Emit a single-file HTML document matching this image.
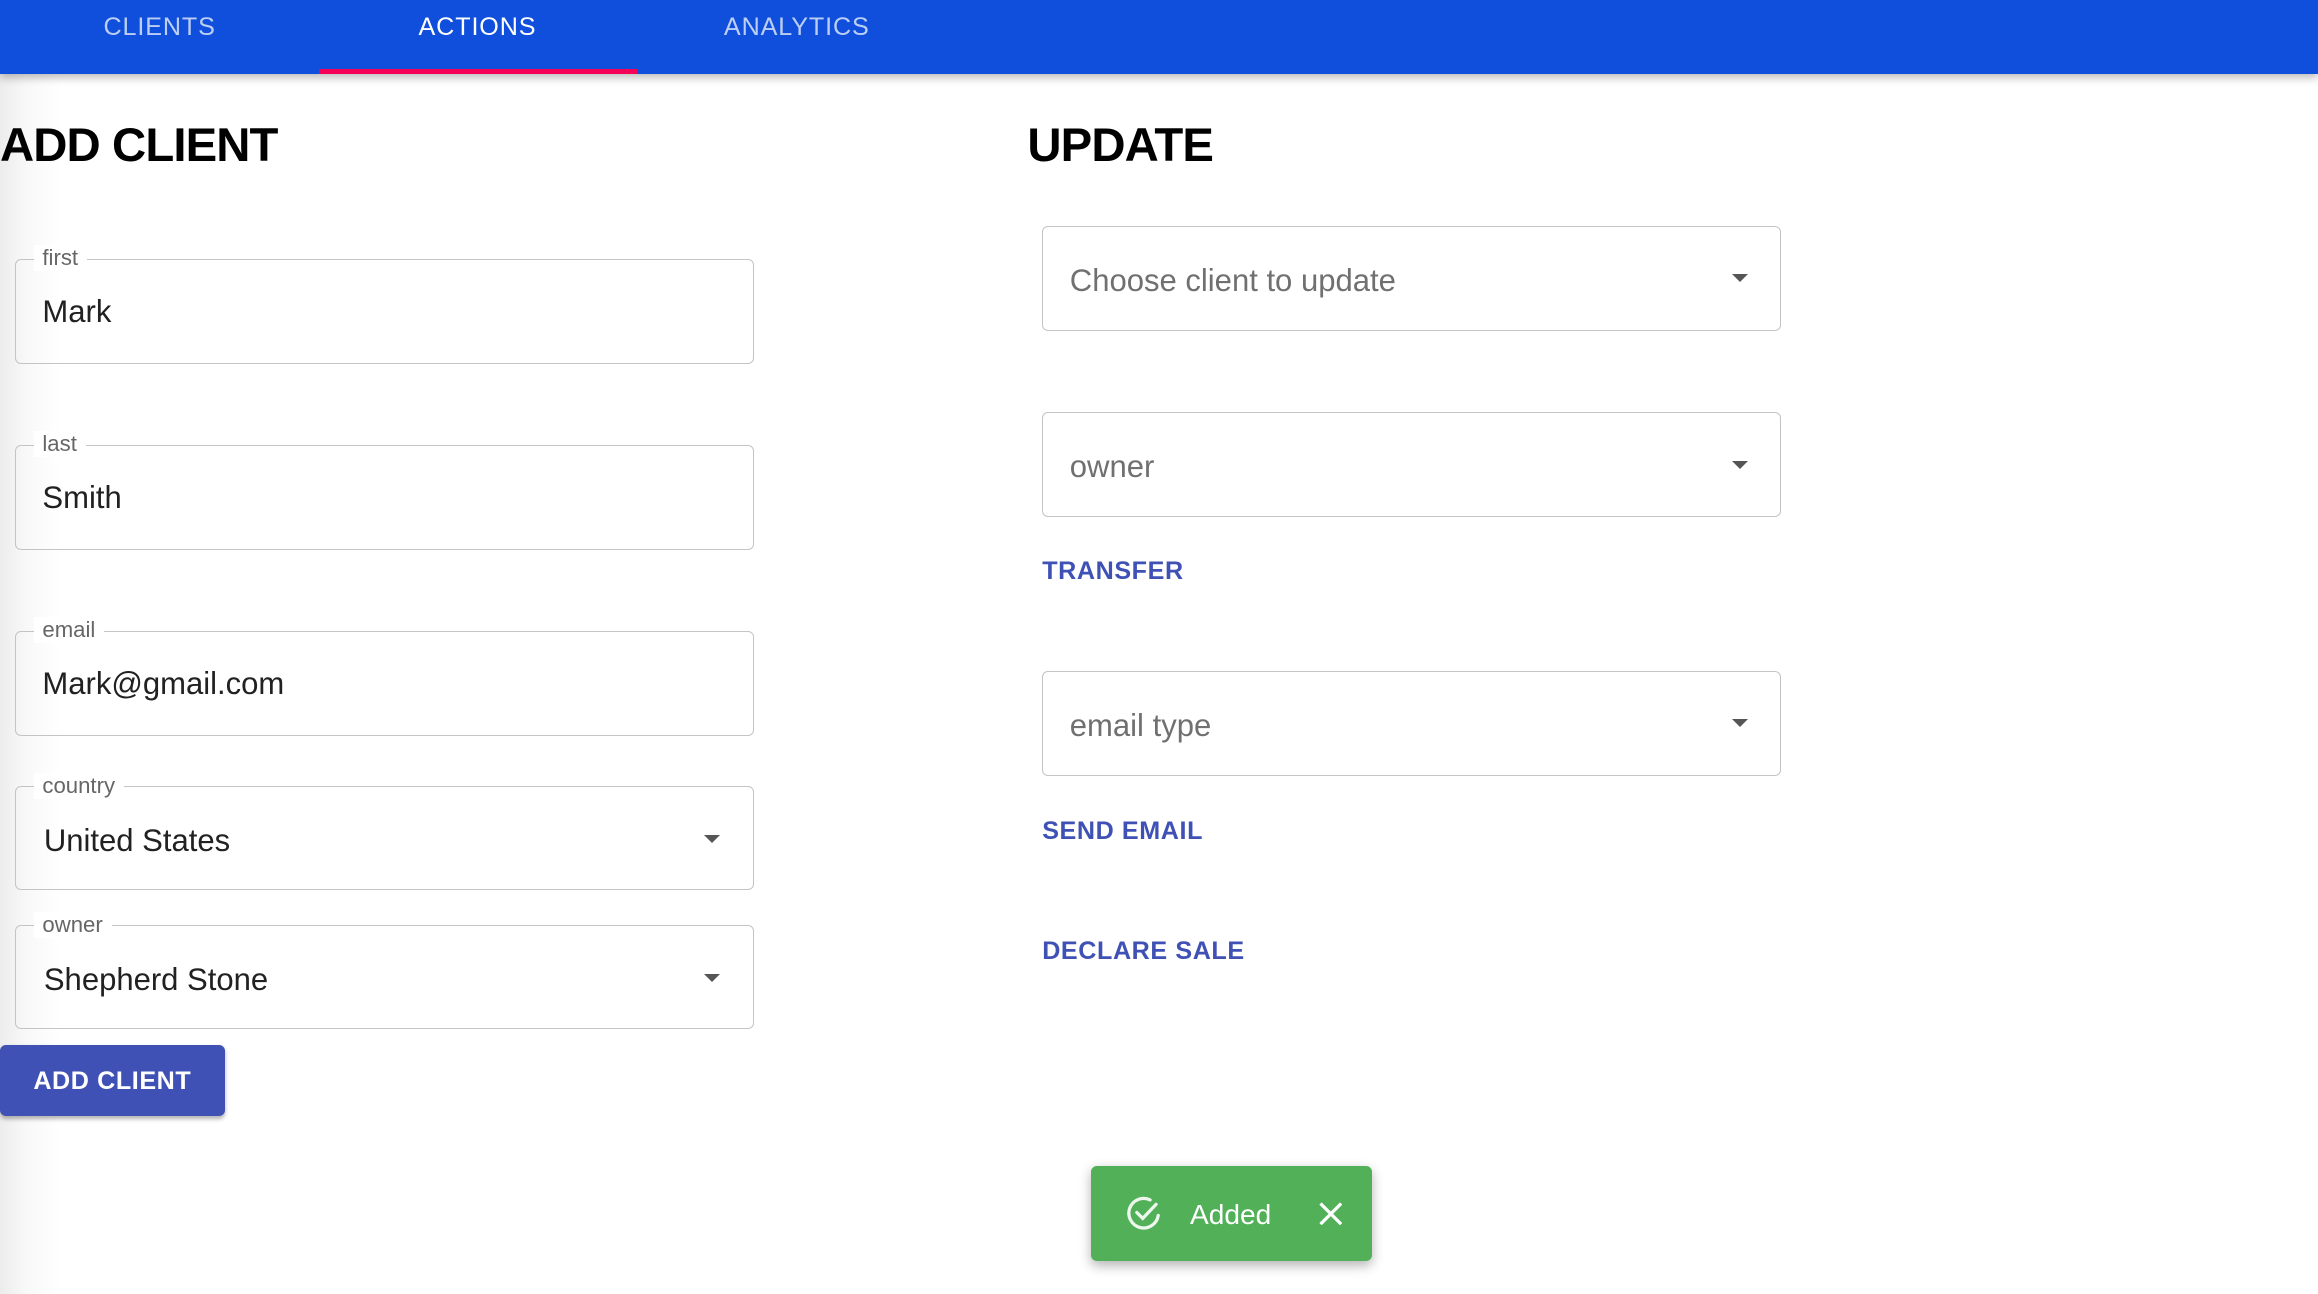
<!DOCTYPE html>
<html><head><meta charset="utf-8"><style>
html,body{margin:0;padding:0;}
body{width:1568px;height:875px;overflow:hidden;zoom:1.4783;font-family:"Liberation Sans",sans-serif;background:linear-gradient(90deg,#ececec 0,#f8f8f8 25px,#fff 60px);position:relative;}
.nav{position:absolute;left:0;top:0;width:1568px;height:50px;background:#0f4fdb;box-shadow:0 2px 6px rgba(0,0,0,.3);}
.tab{position:absolute;top:9px;width:216px;text-align:center;color:rgba(255,255,255,.72);font-size:17px;font-weight:500;letter-spacing:.6px}
.tab.on{color:#fff}
.ind{position:absolute;left:216px;top:47px;width:215px;height:3px;background:#f50057}
h1{position:absolute;margin:0;font-size:32px;font-weight:bold;top:80px;color:#000;letter-spacing:-.6px}
.f{position:absolute;border:1px solid #c4c4c4;border-radius:4px;box-sizing:border-box;width:500px;height:71px}
.f .lb{position:absolute;left:12px;top:-10px;background:#fff;padding:0 6px;font-size:15px;color:#666}
.f .v{position:absolute;left:18px;top:23px;font-size:21px;color:#212121}
.f .v.p{color:#707070;left:18px}
.f .ar{position:absolute;right:22px;top:32px;width:0;height:0;border-left:6px solid transparent;border-right:6px solid transparent;border-top:6px solid #555}
.btn{position:absolute;left:0;top:707px;width:152px;height:48px;background:#3f51b5;color:#fff;border-radius:4px;font-size:17px;font-weight:bold;text-align:center;line-height:50px;letter-spacing:.4px;box-shadow:0 2px 3px rgba(0,0,0,.3)}
.lnk{position:absolute;left:705px;color:#3f51b5;font-size:17px;font-weight:bold;letter-spacing:.4px}
.snack{position:absolute;left:738px;top:789px;width:190px;height:64px;background:#51b058;border-radius:4px;box-shadow:0 3px 8px rgba(0,0,0,.3);color:#fff}
</style></head><body>
<div class="nav">
<div class="tab" style="left:0">CLIENTS</div>
<div class="tab on" style="left:215px">ACTIONS</div>
<div class="tab" style="left:431px">ANALYTICS</div>
<div class="ind"></div>
</div>
<h1 style="left:0">ADD CLIENT</h1>
<h1 style="left:695px">UPDATE</h1>

<div class="f" style="left:10px;top:175px"><span class="lb">first</span><span class="v">Mark</span></div>
<div class="f" style="left:10px;top:301px"><span class="lb">last</span><span class="v">Smith</span></div>
<div class="f" style="left:10px;top:427px"><span class="lb">email</span><span class="v">Mark@gmail.com</span></div>
<div class="f" style="left:10px;top:532px;height:70px"><span class="lb">country</span><span class="v" style="left:19px;top:24px">United States</span><span class="ar"></span></div>
<div class="f" style="left:10px;top:626px;height:70px"><span class="lb">owner</span><span class="v" style="left:19px;top:24px">Shepherd Stone</span><span class="ar"></span></div>
<div class="btn">ADD CLIENT</div>

<div class="f" style="left:705px;top:153px;height:71px"><span class="v p" style="top:24px">Choose client to update</span><span class="ar"></span></div>
<div class="f" style="left:705px;top:279px;height:71px"><span class="v p" style="top:24px">owner</span><span class="ar"></span></div>
<div class="lnk" style="top:377px">TRANSFER</div>
<div class="f" style="left:705px;top:454px;height:71px"><span class="v p" style="top:24px">email type</span><span class="ar"></span></div>
<div class="lnk" style="top:553px">SEND EMAIL</div>
<div class="lnk" style="top:634px">DECLARE SALE</div>

<div class="snack">
<svg style="position:absolute;left:23px;top:19px" width="26" height="26" viewBox="0 0 26 26" fill="none" stroke="#eef7ee" stroke-width="2.2" stroke-linecap="round"><path d="M22.5 14.5A10 10 0 1 1 17 4"/><path d="M8 12.5l4 4 9-9.5"/></svg>
<span style="position:absolute;left:67px;top:22px;font-size:19px;font-weight:500">Added</span>
<svg style="position:absolute;left:154px;top:24px" width="16" height="16" viewBox="0 0 16 16" stroke="#fff" stroke-width="2.2"><path d="M1 1l14 14M15 1L1 15"/></svg>
</div>
</body></html>
